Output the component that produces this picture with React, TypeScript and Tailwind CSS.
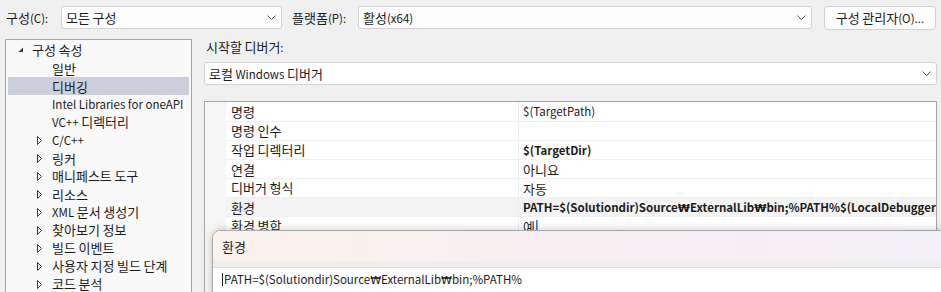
import React from "react";

// Hangul runs render a touch larger than Latin runs, as in the original UI font;
// the won sign comes from a proportional font so it is not full width
function T({ s, bold }: { s: string; bold?: boolean }) {
  const parts = s.split(/([가-힣]+|₩)/).filter((p) => p !== "");
  return (
    <span className={bold ? "font-bold" : ""}>
      {parts.map((p, i) =>
        p === "₩" ? (
          <span key={i} className="text-[11px] font-['DejaVu_Sans',sans-serif]">{p}</span>
        ) : /[가-힣]/.test(p) ? (
          <span key={i} className="text-[13px]">{p}</span>
        ) : (
          <span key={i} className="text-[11.5px]">{p}</span>
        )
      )}
    </span>
  );
}

function Chevron() {
  return (
    <svg width="9" height="5" viewBox="0 0 9 5" className="shrink-0">
      <path d="M0.5 0.5 L4.5 4.5 L8.5 0.5" fill="none" stroke="#5a5a5a" strokeWidth="1" />
    </svg>
  );
}

function Combo({ text, className }: { text: string; className: string }) {
  return (
    <div className={`flex items-center justify-between bg-[#fdfdfd] border border-[#d2d2d2] rounded-[3px] pl-[4px] pr-[5px] ${className}`}>
      <T s={text} />
      <Chevron />
    </div>
  );
}

function Expanded() {
  return (
    <svg width="6" height="6" viewBox="0 0 6 6" className="shrink-0">
      <path d="M5 0.5 L5 5 L0.5 5 Z" fill="#3c3c3c" />
    </svg>
  );
}

function Collapsed() {
  return (
    <svg width="5" height="9" viewBox="0 0 5 9" className="shrink-0">
      <path d="M0.5 0.5 L4.5 4.5 L0.5 8.5 Z" fill="none" stroke="#3c3c3c" strokeWidth="1" />
    </svg>
  );
}

const treeItems = [
  { label: "일반", arrow: false },
  { label: "디버깅", arrow: false, selected: true },
  { label: "Intel Libraries for oneAPI", arrow: false },
  { label: "VC++ 디렉터리", arrow: false },
  { label: "C/C++", arrow: true },
  { label: "링커", arrow: true },
  { label: "매니페스트 도구", arrow: true },
  { label: "리소스", arrow: true },
  { label: "XML 문서 생성기", arrow: true },
  { label: "찾아보기 정보", arrow: true },
  { label: "빌드 이벤트", arrow: true },
  { label: "사용자 지정 빌드 단계", arrow: true },
  { label: "코드 분석", arrow: true },
];

const props = [
  { name: "명령", value: "$(TargetPath)" },
  { name: "명령 인수", value: "" },
  { name: "작업 디렉터리", value: "$(TargetDir)", bold: true },
  { name: "연결", value: "아니요" },
  { name: "디버거 형식", value: "자동" },
  { name: "환경", value: "PATH=$(Solutiondir)Source₩ExternalLib₩bin;%PATH%$(LocalDebuggerEnvironment)", bold: true, selected: true },
  { name: "환경 병합", value: "예", caret: true },
];

export default function App() {
  return (
    <div className="relative w-[941px] h-[292px] overflow-hidden bg-[#f0f0f0] text-[12px] leading-none text-[#1b1b1b] font-['Noto_Sans_CJK_KR',sans-serif] whitespace-nowrap">
      {/* Top bar */}
      <div className="flex items-center h-[23px] mt-[6px] pl-[6px]">
        <span className="w-[55px]"><T s="구성(C):" /></span>
        <Combo className="w-[221px] h-[23px]" text="모든 구성" />
        <span className="ml-[10px] w-[66px]"><T s="플랫폼(P):" /></span>
        <Combo className="w-[454px] h-[23px]" text="활성(x64)" />
        <button className="ml-[12px] w-[112px] h-[24px] bg-[#fdfdfd] border border-[#d0d0d0] rounded-[4px]">
          <T s="구성 관리자(O)..." />
        </button>
      </div>

      <div className="flex mt-[10px]">
        {/* Tree */}
        <div className="ml-[5px] w-[187px] h-[260px] shrink-0 border border-[#a5a5a5] bg-[#f9f9f9] pt-[1px] px-[2px] overflow-hidden">
          <div className="flex items-center h-[18px] pl-[10px]">
            <Expanded />
            <span className="ml-[8px]"><T s="구성 속성" /></span>
          </div>
          {treeItems.map((t) => (
            <div
              key={t.label}
              className={`flex items-center h-[18px] ${t.arrow ? "pl-[29px]" : "pl-[44px]"} ${t.selected ? "bg-[#cccedb]" : ""}`}
            >
              {t.arrow && <Collapsed />}
              <span className={t.arrow ? "ml-[10px]" : ""}><T s={t.label} /></span>
            </div>
          ))}
        </div>

        {/* Right side */}
        <div className="ml-[12px] w-[733px] shrink-0">
          <div className="h-[15px] flex items-center pl-[2px]"><T s="시작할 디버거:" /></div>
          <Combo className="mt-[8px] w-[733px] h-[23px] bg-white" text="로컬 Windows 디버거" />

          <div className="mt-[16px] border border-[#a5a5a5] bg-[#f6f6f6] pl-[21px] h-[200px]">
            {props.map((p, i) => (
              <div
                key={p.name}
                className={`flex border-b border-[#eef0f2] ${i === 0 ? "h-[20px]" : "h-[19px]"} ${p.selected ? "bg-[#f3f3f3]" : "bg-white"}`}
              >
                <div className="w-[293px] shrink-0 flex items-center pl-[5px] border-r border-[#eceef0]"><T s={p.name} /></div>
                <div className="flex-1 flex items-center pl-[4px] overflow-hidden">
                  <T s={p.value} bold={p.bold} />
                  {p.caret && (
                    <span className="flex ml-[1px] h-[12px]">
                      <span className="w-[1px] bg-[#3b7fd6]" />
                      <span className="w-[1px] bg-[#e7953a]" />
                    </span>
                  )}
                </div>
              </div>
            ))}
          </div>
        </div>
      </div>

      {/* Environment edit popup */}
      <div className="absolute left-[212px] top-[230px] w-[800px] h-[80px] rounded-tl-[8px] border border-[#a9a9a9] bg-white shadow-[0_0_8px_rgba(0,0,0,0.22)] overflow-hidden">
        <div className="h-[30px] flex items-center pl-[9px] bg-gradient-to-r from-[#faf2ec] via-[#f8edf4] via-60% to-[#f1f1f7]">
          <T s="환경" />
        </div>
        <div className="h-[7px] bg-[#eeeeee] border-b border-[#e2e2e2]" />
        <div className="flex items-center h-[22px] pl-[9px]">
          <span className="w-[1px] h-[13px] bg-[#1b1b1b]" />
          <span className="ml-[1px]"><T s="PATH=$(Solutiondir)Source₩ExternalLib₩bin;%PATH%" /></span>
        </div>
      </div>
    </div>
  );
}
